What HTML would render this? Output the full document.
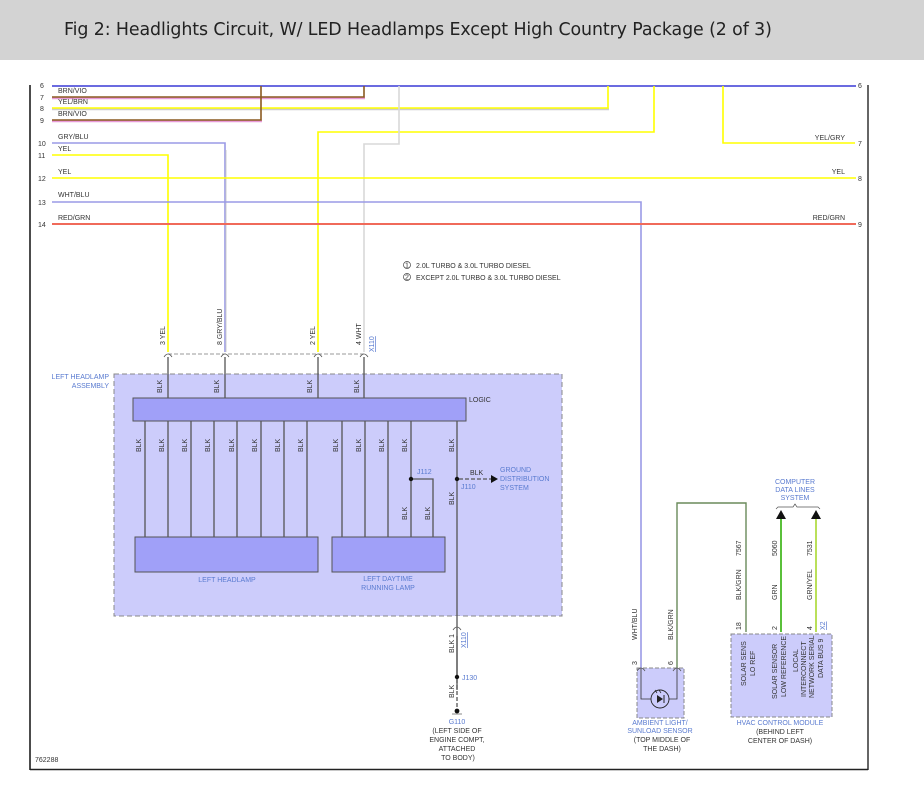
<!DOCTYPE html>
<html><head><meta charset="utf-8"><style>
html,body{margin:0;padding:0;background:#fff;width:924px;height:795px;overflow:hidden}
.hdr{position:absolute;left:0;top:0;width:924px;height:60px;background:#d3d3d3}
.hdr span{position:absolute;left:64px;top:20px;font:17.4px "DejaVu Sans","Liberation Sans",sans-serif;color:#222;letter-spacing:-0.1px}
svg{position:absolute;left:0;top:0}
text{font-family:"Liberation Sans",sans-serif;font-size:7px;fill:#333}
.b{fill:#5a7bd0}
</style></head><body>
<div class="hdr"><span>Fig 2: Headlights Circuit, W/ LED Headlamps Except High Country Package (2 of 3)</span></div>
<svg width="924" height="795" viewBox="0 0 924 795">
<line x1="30" y1="85" x2="30" y2="770" stroke="#111" stroke-width="1.5"/>
<line x1="868" y1="85" x2="868" y2="770" stroke="#333" stroke-width="1.5"/>
<line x1="30" y1="769.5" x2="868" y2="769.5" stroke="#222" stroke-width="1.5"/>
<g fill="none" stroke-width="1.6">
<line x1="52" y1="86" x2="856" y2="86" stroke="#6b6be0" stroke-width="2"/>
<polyline points="52,98 365,98" stroke="#e89ad8" stroke-width="2.4"/>
<polyline points="52,97 364,97 364,86" stroke="#8a5a20"/>
<polyline points="52,109 609,109" stroke="#ccc" stroke-width="2.4"/>
<polyline points="52,108 608,108 608,86" stroke="#ffff00"/>
<polyline points="52,121 262,121" stroke="#e89ad8" stroke-width="2.4"/>
<polyline points="52,120 261,120 261,86" stroke="#8a5a20"/>
<polyline points="318,352 318,132 654,132 654,86" stroke="#ffff00"/>
<polyline points="364,352 364,144 399,144 399,86" stroke="#d8d8d8"/>
<polyline points="52,143 225,143 225,352" stroke="#9a9ae6"/>
<polyline points="226,150 226,352" stroke="#ccc" stroke-width="1"/>
<polyline points="52,155 168,155 168,352" stroke="#ffff00"/>
<polyline points="723,86 723,143 855,143" stroke="#ffff00"/>
<line x1="52" y1="178" x2="856" y2="178" stroke="#ffff00"/>
<polyline points="52,202 641,202 641,668" stroke="#9a9ae6"/>
<line x1="52" y1="224" x2="856" y2="224" stroke="#f06a5a" stroke-width="2"/>
</g>
<text x="58" y="93">BRN/VIO</text><text x="58" y="104">YEL/BRN</text><text x="58" y="116">BRN/VIO</text>
<text x="58" y="139">GRY/BLU</text><text x="58" y="151">YEL</text><text x="58" y="174">YEL</text>
<text x="58" y="197">WHT/BLU</text><text x="58" y="220">RED/GRN</text>
<g font-size="7"><text x="40" y="88">6</text><text x="40" y="100">7</text><text x="40" y="111">8</text><text x="40" y="123">9</text>
<text x="38" y="146">10</text><text x="38" y="158">11</text><text x="38" y="181">12</text><text x="38" y="205">13</text><text x="38" y="227">14</text>
<text x="858" y="88">6</text><text x="858" y="146">7</text><text x="858" y="181">8</text><text x="858" y="227">9</text></g>
<text x="845" y="140" text-anchor="end">YEL/GRY</text><text x="845" y="174" text-anchor="end">YEL</text><text x="845" y="220" text-anchor="end">RED/GRN</text>
<circle cx="407" cy="265" r="3.5" fill="none" stroke="#444" stroke-width="0.7"/><text x="405" y="267.5" font-size="5">1</text>
<circle cx="407" cy="277" r="3.5" fill="none" stroke="#444" stroke-width="0.7"/><text x="405" y="279.5" font-size="5">2</text>
<text x="416" y="268">2.0L TURBO &amp; 3.0L TURBO DIESEL</text>
<text x="416" y="280">EXCEPT 2.0L TURBO &amp; 3.0L TURBO DIESEL</text>
<g font-size="7">
<text transform="translate(165,345) rotate(-90)">3  YEL</text>
<text transform="translate(222,345) rotate(-90)">8  GRY/BLU</text>
<text transform="translate(315,345) rotate(-90)">2  YEL</text>
<text transform="translate(361,345) rotate(-90)">4  WHT</text>
<text class="b" transform="translate(374,352) rotate(-90)" text-decoration="underline">X110</text>
</g>
<line x1="168" y1="354" x2="364" y2="354" stroke="#999" stroke-dasharray="4,2"/>
<g fill="none" stroke="#555" stroke-width="0.8">
<path d="M164,357 q4,-6 8,0"/><path d="M221,357 q4,-6 8,0"/><path d="M314,357 q4,-6 8,0"/><path d="M360,357 q4,-6 8,0"/>
</g>
<rect x="114" y="374" width="448" height="242" fill="#ccccfb" stroke="#888" stroke-dasharray="5,3"/>
<text class="b" x="109" y="379" text-anchor="end">LEFT HEADLAMP</text>
<text class="b" x="109" y="388" text-anchor="end">ASSEMBLY</text>
<g stroke="#555" stroke-width="1.3">
<line x1="168" y1="357" x2="168" y2="398"/><line x1="225" y1="357" x2="225" y2="398"/>
<line x1="318" y1="357" x2="318" y2="398"/><line x1="364" y1="357" x2="364" y2="398"/>
<line x1="145" y1="421" x2="145" y2="537"/><line x1="168" y1="421" x2="168" y2="537"/>
<line x1="191" y1="421" x2="191" y2="537"/><line x1="214" y1="421" x2="214" y2="537"/>
<line x1="237" y1="421" x2="237" y2="537"/><line x1="261" y1="421" x2="261" y2="537"/>
<line x1="284" y1="421" x2="284" y2="537"/><line x1="307" y1="421" x2="307" y2="537"/>
<line x1="342" y1="421" x2="342" y2="537"/><line x1="365" y1="421" x2="365" y2="537"/>
<line x1="388" y1="421" x2="388" y2="537"/><line x1="411" y1="421" x2="411" y2="537"/>
<polyline points="411,479 433,479 433,537" fill="none"/>
<line x1="457" y1="421" x2="457" y2="690"/>
</g>
<rect x="133" y="398" width="333" height="23" fill="#a0a0f8" stroke="#555"/>
<text x="469" y="402">LOGIC</text>
<rect x="135" y="537" width="183" height="35" fill="#a0a0f8" stroke="#555"/>
<rect x="332" y="537" width="113" height="35" fill="#a0a0f8" stroke="#555"/>
<text class="b" x="227" y="582" text-anchor="middle">LEFT HEADLAMP</text>
<text class="b" x="388" y="581" text-anchor="middle">LEFT DAYTIME</text>
<text class="b" x="388" y="590" text-anchor="middle">RUNNING LAMP</text>
<g font-size="7">
<text transform="translate(162,393) rotate(-90)">BLK</text><text transform="translate(219,393) rotate(-90)">BLK</text>
<text transform="translate(312,393) rotate(-90)">BLK</text><text transform="translate(359,393) rotate(-90)">BLK</text>
<text transform="translate(141,452) rotate(-90)">BLK</text><text transform="translate(164,452) rotate(-90)">BLK</text>
<text transform="translate(187,452) rotate(-90)">BLK</text><text transform="translate(210,452) rotate(-90)">BLK</text>
<text transform="translate(234,452) rotate(-90)">BLK</text><text transform="translate(257,452) rotate(-90)">BLK</text>
<text transform="translate(280,452) rotate(-90)">BLK</text><text transform="translate(303,452) rotate(-90)">BLK</text>
<text transform="translate(338,452) rotate(-90)">BLK</text><text transform="translate(361,452) rotate(-90)">BLK</text>
<text transform="translate(384,452) rotate(-90)">BLK</text><text transform="translate(407,452) rotate(-90)">BLK</text>
<text transform="translate(454,452) rotate(-90)">BLK</text>
<text transform="translate(407,520) rotate(-90)">BLK</text><text transform="translate(430,520) rotate(-90)">BLK</text>
<text transform="translate(454,505) rotate(-90)">BLK</text>
</g>
<circle cx="411" cy="479" r="2.2" fill="#111"/><circle cx="457" cy="479" r="2.2" fill="#111"/>
<text class="b" x="417" y="474">J112</text><text class="b" x="461" y="489">J110</text>
<line x1="459" y1="479" x2="492" y2="479" stroke="#555" stroke-dasharray="4,2" stroke-width="1.2"/>
<polygon points="491,475 498,479 491,483" fill="#111"/>
<text x="470" y="475">BLK</text>
<text class="b" x="500" y="472">GROUND</text><text class="b" x="500" y="481">DISTRIBUTION</text><text class="b" x="500" y="490">SYSTEM</text>
<rect x="452" y="616" width="10" height="20" fill="#fff"/>
<line x1="457" y1="616" x2="457" y2="677" stroke="#555" stroke-width="1.3"/>
<path d="M453,630 q4,-6 8,0" fill="none" stroke="#555" stroke-width="0.8"/>
<text transform="translate(454,653) rotate(-90)">BLK  1</text>
<text class="b" transform="translate(466,648) rotate(-90)" text-decoration="underline">X110</text>
<circle cx="457" cy="677" r="2.2" fill="#111"/><text class="b" x="462" y="680">J130</text>
<line x1="457" y1="679" x2="457" y2="709" stroke="#555" stroke-dasharray="4,2" stroke-width="1.3"/>
<text transform="translate(454,698) rotate(-90)">BLK</text>
<circle cx="457" cy="711" r="2.4" fill="#111"/><line x1="452" y1="714" x2="462" y2="714" stroke="#888"/>
<text class="b" x="457" y="724" text-anchor="middle">G110</text>
<text x="457" y="733" text-anchor="middle">(LEFT SIDE OF</text><text x="457" y="742" text-anchor="middle">ENGINE COMPT,</text>
<text x="457" y="751" text-anchor="middle">ATTACHED</text><text x="458" y="760" text-anchor="middle">TO BODY)</text>
<text x="35" y="762" font-size="6.5">762288</text>
<polyline points="677,668 677,503 746,503 746,632" fill="none" stroke="#6a8a5a" stroke-width="1.4"/>
<line x1="781" y1="515" x2="781" y2="632" stroke="#5ac03a" stroke-width="2"/>
<line x1="816" y1="515" x2="816" y2="632" stroke="#a8d830" stroke-width="1.6"/>
<polygon points="776,519 781,510 786,519" fill="#111"/><polygon points="811,519 816,510 821,519" fill="#111"/>
<path d="M776,509 l2,-2 h15 l2,-3 l2,3 h21 l2,2" fill="none" stroke="#555" stroke-width="0.7"/>
<text class="b" x="795" y="484" text-anchor="middle">COMPUTER</text><text class="b" x="795" y="492" text-anchor="middle">DATA LINES</text><text class="b" x="795" y="500" text-anchor="middle">SYSTEM</text>
<g font-size="7">
<text transform="translate(637,640) rotate(-90)">WHT/BLU</text>
<text transform="translate(673,640) rotate(-90)">BLK/GRN</text>
<text transform="translate(741,600) rotate(-90)">BLK/GRN</text><text transform="translate(741,556) rotate(-90)">7567</text>
<text transform="translate(777,600) rotate(-90)">GRN</text><text transform="translate(777,556) rotate(-90)">5060</text>
<text transform="translate(812,600) rotate(-90)">GRN/YEL</text><text transform="translate(812,556) rotate(-90)">7531</text>
<text transform="translate(741,630) rotate(-90)">18</text><text transform="translate(777,630) rotate(-90)">2</text>
<text transform="translate(812,630) rotate(-90)">4</text>
<text class="b" transform="translate(825,630) rotate(-90)" text-decoration="underline">X2</text>
<text transform="translate(637,665) rotate(-90)">3</text><text transform="translate(673,665) rotate(-90)">6</text>
</g>
<rect x="637" y="668" width="47" height="50" fill="#ccccfb" stroke="#888" stroke-dasharray="4,2"/>
<polyline points="641,668 641,699 677,699 677,668" fill="none" stroke="#333" stroke-width="0.8"/>
<circle cx="660" cy="699" r="9" fill="#ccccfb" stroke="#222" stroke-width="0.9"/>
<polygon points="657,695 657,703 663,699" fill="#222"/><line x1="664" y1="695" x2="664" y2="703" stroke="#222"/>
<path d="M657,693 l-2,-3 M661,693 l-2,-3" stroke="#222" stroke-width="0.7"/>
<g fill="none" stroke="#555" stroke-width="0.8"><path d="M637,671 q4,-6 8,0"/><path d="M673,671 q4,-6 8,0"/>
<path d="M742,637 q4,-6 8,0"/><path d="M777,637 q4,-6 8,0"/><path d="M812,637 q4,-6 8,0"/></g>
<text class="b" x="660" y="725" text-anchor="middle">AMBIENT LIGHT/</text><text class="b" x="660" y="733" text-anchor="middle">SUNLOAD SENSOR</text>
<text x="662" y="742" text-anchor="middle">(TOP MIDDLE OF</text><text x="662" y="751" text-anchor="middle">THE DASH)</text>
<rect x="731" y="634" width="101" height="83" fill="#ccccfb" stroke="#888" stroke-dasharray="4,2"/>
<g font-size="7">
<text transform="translate(746,686) rotate(-90)">SOLAR SENS</text><text transform="translate(755,676) rotate(-90)">LO REF</text>
<text transform="translate(777,699) rotate(-90)">SOLAR SENSOR</text><text transform="translate(786,697) rotate(-90)">LOW REFERENCE</text>
<text transform="translate(798,672) rotate(-90)">LOCAL</text><text transform="translate(806,697) rotate(-90)">INTERCONNECT</text>
<text transform="translate(814,698) rotate(-90)">NETWORK SERIAL</text><text transform="translate(823,678) rotate(-90)">DATA BUS 9</text>
</g>
<text class="b" x="780" y="725" text-anchor="middle">HVAC CONTROL MODULE</text>
<text x="780" y="734" text-anchor="middle">(BEHIND LEFT</text><text x="780" y="743" text-anchor="middle">CENTER OF DASH)</text>
</svg>
</body></html>
